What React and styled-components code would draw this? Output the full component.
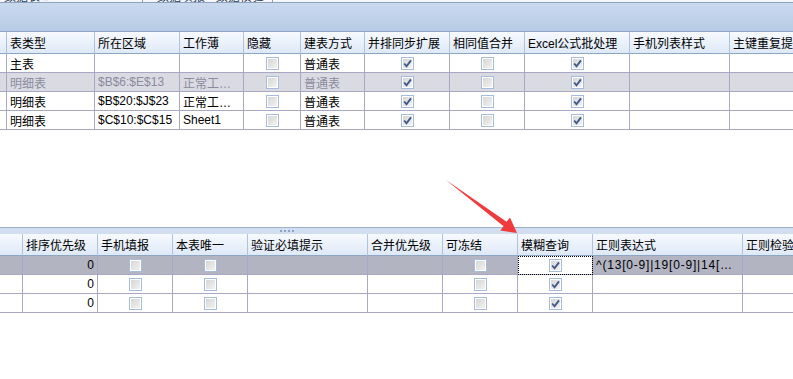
import React from 'react';
import styled, { createGlobalStyle } from 'styled-components';

const GlobalStyle = createGlobalStyle`
  html, body {
    margin: 0;
    padding: 0;
    background: #ffffff;
  }
  body {
    font-family: "Liberation Sans", "Noto Sans CJK SC", sans-serif;
    font-size: 12px;
    color: #000;
  }
`;

const Page = styled.div`
  position: relative;
  width: 793px;
  height: 379px;
  overflow: hidden;
  display: flex;
  flex-direction: column;
  background: #fff;
`;

const TabStrip = styled.div`
  height: 2px;
  display: flex;
  align-items: flex-end;
  overflow: hidden;
  border-bottom: 1px solid #8fa2bd;
  background: #f4f6fa;
`;

const TabLabel = styled.span`
  flex: none;
  box-sizing: border-box;
  width: ${p => p.$w}px;
  padding-left: ${p => p.$pad || 0}px;
  overflow: hidden;
  line-height: 9px;
  white-space: nowrap;
  color: ${p => p.$color || '#2b3d5c'};
`;

const TabSep = styled.span`
  flex: none;
  width: 1px;
  height: 2px;
  background: #8f9bb0;
`;

const TopPane = styled.div`
  height: 224px;
  flex: none;
  display: flex;
  flex-direction: column;
`;

const GroupBand = styled.div`
  height: 28px;
  flex: none;
  background: linear-gradient(#c9d9ef, #b7cbe5);
  border-bottom: 1px solid #8ea5c4;
`;

const Splitter = styled.div`
  height: 6px;
  flex: none;
  display: flex;
  align-items: center;
  background: #d1deef;
  border-top: 1px solid #9cb1cd;
`;

const Grip = styled.div`
  margin-left: 280px;
  display: flex;
  gap: 2px;

  & > i {
    width: 2px;
    height: 2px;
    background: #8ea3c3;
  }
`;

const Row = styled.div`
  display: flex;
  flex: none;
  height: ${p => (p.$head ? 22 : 19)}px;
  white-space: nowrap;
  background: ${p =>
    p.$head ? 'linear-gradient(#f7faff, #dde8f6)' : p.$bg || '#fff'};
  color: ${p => p.$color || '#000'};
`;

const Cell = styled.div`
  flex: none;
  box-sizing: border-box;
  width: ${p => p.$w}px;
  height: 100%;
  display: flex;
  align-items: center;
  justify-content: ${p =>
    p.$align === 'center' ? 'center' : p.$align === 'right' ? 'flex-end' : 'flex-start'};
  padding: 0 3px;
  overflow: hidden;
  border-right: 1px solid ${p => (p.$head ? '#b0c3dc' : '#a8a8c4')};
  border-bottom: 1px solid ${p => (p.$head ? '#8ea6c6' : '#a8a8c4')};
  background: ${p => (p.$focus ? '#fff' : 'transparent')};
  outline: ${p => (p.$focus ? '1px dotted #000' : 'none')};
  outline-offset: -1px;
`;

const Text = styled.span`
  overflow: hidden;
  text-overflow: ellipsis;
  white-space: nowrap;
  letter-spacing: ${p => (p.$wide ? '0.8px' : 'normal')};
`;

const Box = styled.span`
  width: 13px;
  height: 13px;
  box-sizing: border-box;
  border: 1px solid #a6bcda;
  padding: 1px;
  background: #fff;
  display: flex;

  & > span {
    flex: 1;
    background: linear-gradient(135deg, #d6d6d6, #f2f2f2);
    display: flex;
    align-items: center;
    justify-content: center;
  }
`;

const Arrow = styled.svg`
  position: absolute;
  left: 0;
  top: 0;
  pointer-events: none;
`;

const Check = ({ on }) => (
  <Box>
    <span>
      {on && (
        <svg width="9" height="9" viewBox="0 0 9 9">
          <polyline points="1.2,4.5 3.5,7.3 8,1.4" fill="none" stroke="#3e5a8c" strokeWidth="1.9" />
        </svg>
      )}
    </span>
  </Box>
);

const topCols = [6, 88, 85, 64, 57, 64, 85, 75, 105, 100, 120];
const topHead = ['', '表类型', '所在区域', '工作薄', '隐藏', '建表方式', '并排同步扩展', '相同值合并', 'Excel公式批处理', '手机列表样式', '主键重复提示'];
const topRows = [
  { vals: ['', '主表', '', '', false, '普通表', true, false, true, '', ''] },
  { vals: ['', '明细表', '$B$6:$E$13', '正常工作簿', false, '普通表', true, false, true, '', ''], muted: true },
  { vals: ['', '明细表', '$B$20:$J$23', '正常工作簿', false, '普通表', true, false, true, '', ''] },
  { vals: ['', '明细表', '$C$10:$C$15', 'Sheet1', false, '普通表', true, false, true, '', ''] },
];

const botCols = [23, 75, 75, 75, 120, 75, 75, 75, 150, 120];
const botHead = ['', '排序优先级', '手机填报', '本表唯一', '验证必填提示', '合并优先级', '可冻结', '模糊查询', '正则表达式', '正则检验提示'];
const regex = '^(13[0-9]|19[0-9]|14[5|7]|15[0|1|2|3|5|6|7|8|9]|18[0|1|2|3|5|6|7|8|9])\\d{8}$';
const botRows = [
  { vals: ['', '0', false, false, '', '', false, true, regex, ''], selected: true },
  { vals: ['', '0', false, false, '', '', false, true, '', ''] },
  { vals: ['', '0', false, false, '', '', false, true, '', ''] },
];

const Grid = ({ cols, head, rows, numCol, wideCol, focusCol }) => (
  <>
    <Row $head>
      {head.map((h, i) => (
        <Cell key={i} $w={cols[i]} $head>
          <Text>{h}</Text>
        </Cell>
      ))}
    </Row>
    {rows.map((r, ri) => (
      <Row
        key={ri}
        $bg={r.muted ? '#dadae3' : r.selected ? '#b2b4c2' : '#fff'}
        $color={r.muted ? '#8b8b9e' : '#000'}
      >
        {r.vals.map((v, i) => {
          const isBool = typeof v === 'boolean';
          return (
            <Cell
              key={i}
              $w={cols[i]}
              $align={isBool ? 'center' : i === numCol ? 'right' : 'left'}
              $focus={r.selected && i === focusCol}
            >
              {isBool ? <Check on={v} /> : <Text $wide={i === wideCol}>{v}</Text>}
            </Cell>
          );
        })}
      </Row>
    ))}
  </>
);

export default function App() {
  return (
    <Page>
      <GlobalStyle />
      <TabStrip>
        <TabLabel $w={42} $pad={4}>数据表</TabLabel>
        <TabLabel $w={100} $color="#3b6fc4">■</TabLabel>
        <TabSep />
        <TabLabel $w={129} $pad={14}>数据填报 · 数据校验</TabLabel>
        <TabSep />
      </TabStrip>
      <TopPane>
        <GroupBand />
        <Grid cols={topCols} head={topHead} rows={topRows} />
      </TopPane>
      <Splitter>
        <Grip>
          <i />
          <i />
          <i />
          <i />
        </Grip>
      </Splitter>
      <Grid cols={botCols} head={botHead} rows={botRows} numCol={1} wideCol={8} focusCol={7} />
      <Arrow width="793" height="379" viewBox="0 0 793 379">
        <polygon
          points="446,180 506.6,221.8 510,217.4 517,233 500.3,230.6 503.6,226.2"
          fill="#ef3b3b"
        />
      </Arrow>
    </Page>
  );
}
